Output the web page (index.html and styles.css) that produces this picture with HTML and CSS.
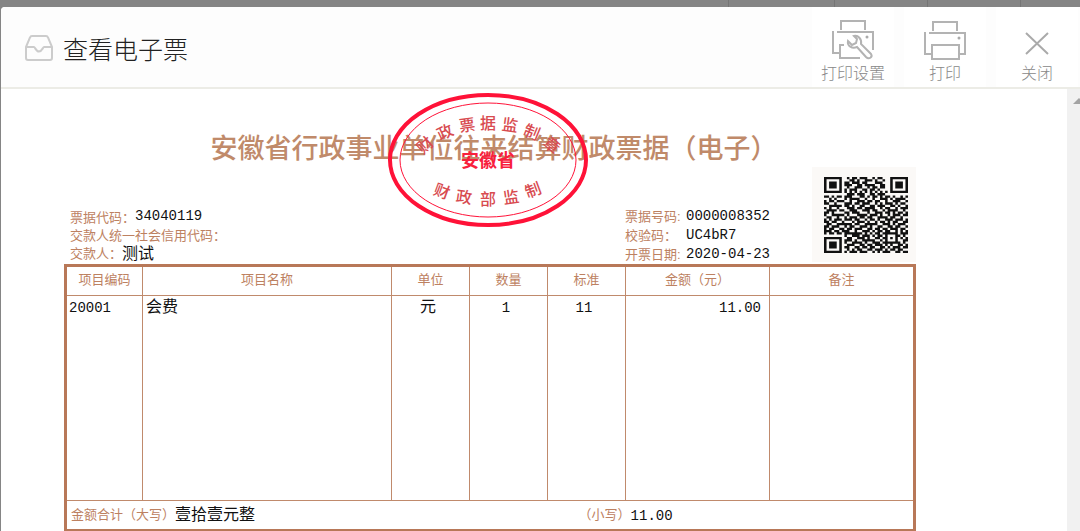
FILE: index.html
```html
<!DOCTYPE html>
<html lang="zh-CN">
<head>
<meta charset="utf-8">
<title>查看电子票</title>
<link rel="stylesheet" href="styles.css">
</head>
<body>
<div class="backdrop"><i></i><i></i><i></i><i></i></div>
<main class="dialog">
  <header class="bar">
    <svg class="inbox" viewBox="0 0 28 26" aria-hidden="true"><path d="M1 12 5 2.500Q5.500 1 7 1H21Q22.500 1 23 2.500L27 12V23Q27 25 25 25H3Q1 25 1 23ZM1 12H9C10 12 11 16.500 14 16.500S18 12 19 12H27"/></svg>
    <h1>查看电子票</h1>
    <div class="actions">
      <button type="button">
        <svg width="42" height="42" viewBox="0 0 42 42" aria-hidden="true"><path d="M9 11V2H33V11M5 13H41V31M1 12V34H7M12 26H8V39H28"/><circle class="dot" cx="35" cy="18" r="1.500"/><path d="M22 17C26 16 30 20 29 25L39 35C41 38 37 41 34 38L25 28C20 30 15 27 16 22L20 26 24 24 25 20Z"/></svg>
        <span>打印设置</span>
      </button>
      <button type="button">
        <svg width="42" height="42" viewBox="0 0 42 42" aria-hidden="true"><path d="M9 12V3H33V12M5 14H41V35H36M1 13V35H7M8 26H35V40H8Z"/><circle class="dot" cx="35" cy="19" r="1.500"/></svg>
        <span>打印</span>
      </button>
      <button type="button">
        <svg width="42" height="42" viewBox="0 0 42 42" aria-hidden="true"><path class="cross" d="M10 14 32 35M32 14 10 35"/></svg>
        <span>关闭</span>
      </button>
    </div>
  </header>
  <div class="viewport">
    <section class="receipt">
      <h2>安徽省行政事业单位往来结算财政票据（电子）</h2>
      <svg class="seal" viewBox="0 0 204 138" role="img" aria-label="财政票据监制章">
        <ellipse class="outer" cx="102" cy="69" rx="98" ry="65"/>
        <ellipse class="inner" cx="102" cy="69" rx="88" ry="57"/>
        <g class="ring">
          <text transform="translate(39 54) rotate(-42)" y="6">财</text>
          <text transform="translate(59 41) rotate(-25)" y="6">政</text>
          <text transform="translate(81 34) rotate(-8)" y="6">票</text>
          <text transform="translate(102 32)" y="6">据</text>
          <text transform="translate(124 34) rotate(8)" y="6">监</text>
          <text transform="translate(146 41) rotate(22)" y="6">制</text>
          <text transform="translate(166 54) rotate(40)" y="6">章</text>
          <text transform="translate(56 100) rotate(20)" y="6">财</text>
          <text transform="translate(78 106) rotate(8)" y="6">政</text>
          <text transform="translate(102 108)" y="6">部</text>
          <text transform="translate(125 106) rotate(-8)" y="6">监</text>
          <text transform="translate(147 99) rotate(-20)" y="6">制</text>
        </g>
        <text class="region" x="102" y="76">安徽省</text>
      </svg>
      <div class="meta">
        <dl>
          <div><dt>票据代码：</dt><dd>34040119</dd></div>
          <div><dt>交款人统一社会信用代码：</dt><dd></dd></div>
          <div><dt>交款人：</dt><dd class="han">测试</dd></div>
        </dl>
        <dl class="side">
          <div><dt>票据号码:</dt><dd>0000008352</dd></div>
          <div><dt>校验码：</dt><dd>UC4bR7</dd></div>
          <div><dt>开票日期:</dt><dd>2020-04-23</dd></div>
        </dl>
        <div class="code"><svg id="qr" viewBox="0 0 33 33" preserveAspectRatio="none" role="img" aria-label="二维码"></svg></div>
      </div>
      <table>
        <colgroup><col class="c1"><col class="c2"><col class="c3"><col class="c3"><col class="c3"><col class="c4"><col class="c5"></colgroup>
        <thead><tr><th>项目编码</th><th>项目名称</th><th>单位</th><th>数量</th><th>标准</th><th>金额（元）</th><th>备注</th></tr></thead>
        <tbody><tr><td>20001</td><td class="han">会费</td><td class="mid han">元</td><td class="mid">1</td><td class="mid">11</td><td class="amount">11.00</td><td></td></tr></tbody>
        <tfoot><tr><td colspan="7"><div class="total"><p><span>金额合计（大写）</span><b>壹拾壹元整</b></p><p><span>（小写）</span>11.00</p></div></td></tr></tfoot>
      </table>
    </section>
    <div class="scroll"><i></i></div>
  </div>
</main>
<script src="qr.js"></script>
</body>
</html>
```
FILE: styles.css
```css
* { box-sizing: border-box; }
body {
  margin: 0;
  background: #858585;
  font-family: "Liberation Sans", "Noto Sans CJK SC", sans-serif;
  overflow: hidden;
}
h1, h2, p, dl, dd { margin: 0; font-weight: 400; }
.backdrop { height: 7px; display: flex; justify-content: flex-end; padding-right: 59px; }
.backdrop i { width: 93px; border-left: 1px solid #757575; }
.backdrop i:first-child { width: 106px; }
.backdrop i:last-child { width: 1px; }
.dialog {
  display: flex;
  flex-direction: column;
  height: calc(100vh - 7px);
  margin-left: 1px;
  background: #fff;
  border-radius: 4px 0 0 0;
  overflow: hidden;
}
.bar {
  display: flex;
  flex: none;
  align-items: center;
  height: 82px;
  padding-left: 24px;
  background: #fdfdfd;
  border-bottom: 2px solid #ecece6;
}
.inbox { width: 28px; height: 26px; fill: none; stroke: #ccc; stroke-width: 2; margin: 2px 10px 0 0; }
.bar h1 { flex: 1; font-size: 25px; line-height: 36px; font-weight: 300; color: #222; padding-top: 6px; }
.actions { display: flex; gap: 10px; padding-right: 2px; }
.actions button {
  display: flex;
  flex-direction: column;
  align-items: center;
  width: 82px;
  height: 80px;
  padding: 12px 0 0;
  border: 0;
  background: #fff;
  color: #888;
  font-family: inherit;
  font-size: 16px;
  line-height: 26px;
  font-weight: 300;
}
.actions svg { fill: none; stroke: #b3b3b3; stroke-width: 2; }
.actions .dot { fill: #aaa; stroke: none; }
.actions .cross { stroke: #aaa; }
.viewport { display: flex; flex: 1; min-height: 0; }
.scroll { flex: none; width: 13px; background: #f1f1f1; overflow: hidden; padding: 9px 0 0 6px; }
.scroll i { display: block; width: 12px; border: 6px solid transparent; border-top: 0; border-bottom-color: #a3a3a3; }
.receipt { position: relative; flex: 1; margin: 0 151px 0 63px; color: #111; }
.receipt h2 {
  padding: 42px 0 0 8px;
  height: 78px;
  text-align: center;
  white-space: nowrap;
  font-size: 27px;
  line-height: 36px;
  font-weight: 500;
  color: #c08a6a;
}
.seal { position: absolute; top: 2px; left: calc(50% - 104px); width: 204px; height: 138px; }
.seal ellipse { fill: none; stroke: #ff1238; }
.seal .outer { stroke-width: 4; }
.seal .inner { stroke-width: 1; }
.seal text { text-anchor: middle; }
.seal .ring text { fill: #d84b50; font-size: 16px; font-weight: 500; }
.seal .region { fill: #f8203c; font-size: 18px; font-weight: 700; }
.meta { display: flex; font-size: 14px; height: 97px; }
.meta dl { flex: 1; padding: 40px 0 0 6px; }
.meta .side { flex: none; width: 188px; padding: 39px 0 0 1px; }
.meta dl div { display: flex; align-items: center; height: 18px; white-space: nowrap; }
.meta .side div { height: 19px; }
.meta dt { font-size: 13px; color: #bd8161; }
.side dt { width: 61px; }
.meta dd, table { font-family: "Liberation Mono", "Noto Sans CJK SC", monospace; }
.meta .han, td.han { font-size: 16px; }
.code { flex: none; width: 104px; height: 95px; padding: 10px 8px 9px 12px; background: #fbf9f7; }
.code svg { display: block; width: 84px; height: 76px; }
.code path { fill: #111; }
table { width: 100%; table-layout: fixed; border-collapse: collapse; border: 3px solid #b87858; font-size: 14px; }
.c1 { width: 77px; }
.c2 { width: 249px; }
.c3 { width: 78px; }
.c4 { width: 144px; }
th, td { border: 1px solid #c08a6c; padding: 0 3px; vertical-align: top; text-align: left; line-height: 24px; }
th { height: 30px; vertical-align: middle; text-align: center; font-size: 13px; font-weight: 400; color: #bd8161; }
td:first-child { padding-left: 2px; }
tbody td { height: 205px; }
td.mid { text-align: center; padding-right: 8px; }
td.amount { text-align: right; padding-right: 8px; }
tfoot td { height: 30px; vertical-align: middle; }
.total { display: flex; padding-top: 2px; }
.total p { display: flex; align-items: center; flex: 1; padding-left: 2px; }
.total p:first-child { flex: none; width: 60%; }
.total p:last-child { padding-left: 5px; }
.total span { font-size: 13px; color: #bd8161; }
.total b { font-size: 16px; font-weight: 400; }
```
FILE: qr.js
```js
const rows = [
  "111111100101101110010110010111111",
  "100000100011010011101001010100000",
  "101110101101110110001110010101110",
  "101110101110011011110011010101110",
  "101110100100111001011011010101110",
  "100000101011100110110100010100000",
  "111111101010101010101010101111111",
  "000000000111011100110111000000000",
  "110101101110001101011010110100101",
  "001010001011110010010011101011110",
  "101101110010011101101100100111001",
  "110010001110110111001010111010110",
  "001111101101001100110111001101001",
  "101001000111011011110010110010111",
  "011110110011100111011001011110010",
  "110100001101110001001110110101101",
  "100111110100011110111010010111011",
  "011001001011101101100111101100100",
  "101011101110110010110100111011101",
  "110110010001011101001011010110011",
  "011001111110110011111001110101110",
  "110111001011001110100110011011001",
  "101100110110111001101101101110110",
  "111011011100100111010110110010101",
  "101101101111111010101101111110111",
  "000000001001110111010110100011010",
  "111111100110011101001101101010101",
  "100000101110100111110010100010011",
  "101110101001111010011101111111010",
  "101110100111001101101110101001101",
  "101110101100110110110011010111011",
  "100000100101011001101110101101100",
  "111111101011101110010101110011011"
];
const finder = ["1111111", "1000001", "1011101", "1011101", "1011101", "1000001", "1111111"];
let d = "";
rows.forEach((row, y) => {
  const line = y < 7 ? row.slice(0, 25) + "0" + finder[y] : row;
  for (const run of line.matchAll(/1+/g)) {
    d += `M${run.index} ${y}h${run[0].length}v1h-${run[0].length}z`;
  }
});
const path = document.createElementNS("http://www.w3.org/2000/svg", "path");
path.setAttribute("d", d);
document.getElementById("qr").append(path);
```
